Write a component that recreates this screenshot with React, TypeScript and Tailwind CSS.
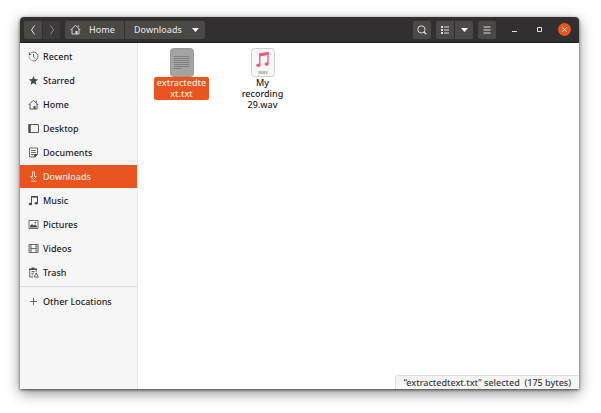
import { useState, type ReactNode } from "react";

const stroke = { fill: "none", stroke: "currentColor", strokeWidth: 1 };

const icons: Record<string, ReactNode> = {
  Recent: (
    <g {...stroke} strokeWidth={0.8}>
      <path d="M3.2 1.6A4.5 4.5 0 1 1 5.5 10" />
      <path d="M5.5 10A4.5 4.5 0 0 1 1.2 4.6" strokeDasharray="1.2 1" />
      <path d="M5.5 3v3l1.8 1.6" />
      <path d="M.8 1v2.8h2.8z" fill="currentColor" stroke="none" />
    </g>
  ),
  Starred: <path d="M5.5 1l1.3 3.1 3.4.3-2.6 2.2.8 3.3-2.9-1.8-2.9 1.8.8-3.3L.8 4.4l3.4-.3z" fill="currentColor" />,
  Home: (
    <>
      <path d="M.7 6L5.5 1.2 10.3 6M2 5v5h7V5M8.3 3.3V1.5" {...stroke} strokeWidth={0.9} />
      <path d="M5.5 7h2v3h-2z" fill="currentColor" />
    </>
  ),
  Desktop: (
    <>
      <path d="M1 1.5h9.5v8H1z" {...stroke} strokeWidth={0.9} />
      <path d="M.5 1h2.2v9H.5z" fill="currentColor" />
    </>
  ),
  Documents: (
    <>
      <path d="M1.5 1h8v6.5L7 10H1.5z" {...stroke} strokeWidth={0.8} />
      <path d="M3 3.5h5M3 5.5h5M3 7.5h2.5" {...stroke} strokeWidth={0.8} />
      <path d="M6 7h3.7L6.5 10.5z" fill="currentColor" />
    </>
  ),
  Downloads: <path d="M4.5 .8v4.7H2.5l3 3 3-3h-2V.8zM3 10.2h5" {...stroke} strokeWidth={0.8} />,
  Music: (
    <>
      <path d="M3.5 9V1.5h6V8" {...stroke} />
      <path d="M3 1h7v1.6H3z" fill="currentColor" />
      <ellipse cx="2.4" cy="9" rx="1.7" ry="1.3" fill="currentColor" />
      <ellipse cx="8.3" cy="8.2" rx="1.7" ry="1.3" fill="currentColor" />
    </>
  ),
  Pictures: (
    <>
      <path d="M1 1.5h9v8H1z" {...stroke} strokeWidth={0.8} />
      <path d="M2 8.5V7l2-2 1.6 1.6L7.2 5.4 9 7.2v1.3z" fill="currentColor" />
      <circle cx="7.4" cy="3.6" r="0.9" fill="currentColor" />
    </>
  ),
  Videos: (
    <>
      <path d="M1 1.5h9v8H1zM3 1.5v8M8 1.5v8M3 5.5h5" {...stroke} strokeWidth={0.8} />
      <path d="M1 3.5h2M1 5.5h2M1 7.5h2M8 3.5h2M8 5.5h2M8 7.5h2" {...stroke} strokeWidth={0.4} />
    </>
  ),
  Trash: (
    <>
      <path d="M1 1.5h8V3H1zM3.5.5h3v1h-3z" fill="currentColor" />
      <path d="M1.7 3v7H5M8.3 3v2.2M3.5 4.5h3M3.5 6.3h2.5M3.5 8h1.5" {...stroke} strokeWidth={0.8} />
      <path d="M8.2 6l2.2 4H6z" {...stroke} strokeWidth={0.8} strokeLinejoin="round" />
    </>
  ),
  "Other Locations": <path d="M5.5 2v7M2 5.5h7" {...stroke} strokeWidth={0.8} />,
};

const places = ["Recent", "Starred", "Home", "Desktop", "Documents", "Downloads", "Music", "Pictures", "Videos", "Trash"];

function PlaceIcon({ name }: { name: string }) {
  return (
    <svg viewBox="0 0 11 11" className="h-[11px] w-[11px] shrink-0" aria-hidden="true">
      {icons[name]}
    </svg>
  );
}

function Place({ name, active, onSelect }: { name: string; active: boolean; onSelect: () => void }) {
  return (
    <button
      onClick={onSelect}
      className={`${active ? "bg-[#e95420] text-[#ffe9df]" : "text-[#4a4a4a]"} flex h-[23px] w-full items-center gap-1 pl-2 text-left`}
    >
      <PlaceIcon name={name} />
      <span className={active ? "text-[#ffe9df]" : "text-[#1c1c1c]"}>{name}</span>
    </button>
  );
}

function Caret() {
  return (
    <svg viewBox="0 0 7 4" className="h-1 w-[7px]" aria-hidden="true">
      <path d="M0 0h7L3.5 4z" fill="#fff" />
    </svg>
  );
}

const tool = "flex h-[18px] w-[18px] items-center justify-center bg-[#4b4946]";

function HeaderBar() {
  return (
    <header className="flex h-[26px] shrink-0 items-center rounded-t-[4px] border-b border-[#1d1b1b] bg-[#322f30] pr-2 pl-1 text-[#dedede]">
      <div className="flex gap-px">
        <button aria-label="Back" className={`${tool} rounded-l-[2px]`}>
          <svg viewBox="0 0 6 10" className="h-[10px] w-[6px]"><path d="M4.5 .5L1.5 5l3 4.5" {...stroke} /></svg>
        </button>
        <button aria-label="Forward" className="flex h-[18px] w-[17px] items-center justify-center rounded-r-[2px] bg-[#3d3b3a] text-[#8b8987]">
          <svg viewBox="0 0 6 10" className="h-[10px] w-[6px]"><path d="M1.5 .5l3 4.5-3 4.5" {...stroke} /></svg>
        </button>
      </div>

      <nav className="ml-[5px] flex gap-px">
        <button className="flex h-[18px] w-[59px] items-center gap-2 rounded-l-[2px] bg-[#4b4946] pl-[5px]">
          <PlaceIcon name="Home" />
          Home
        </button>
        <button className="flex h-[18px] w-20 items-center justify-between rounded-r-[2px] bg-[#4b4946] pr-[6px] pl-[9px]">
          Downloads
          <Caret />
        </button>
      </nav>

      <div className="ml-auto flex gap-[5px]">
        <button aria-label="Search" className={`${tool} rounded-[2px]`}>
          <svg viewBox="0 0 10 10" className="h-[10px] w-[10px]">
            <circle cx="4.4" cy="4.4" r="3.6" {...stroke} />
            <path d="M7 7l2.3 2.3" {...stroke} strokeWidth={1.3} />
          </svg>
        </button>
        <div className="flex gap-px">
          <button aria-label="List view" className={`${tool} rounded-l-[2px]`}>
            <svg viewBox="0 0 8 8" className="h-2 w-2">
              <path d="M0 0h2v2H0zM0 3h2v2H0zM0 6h2v2H0z" fill="currentColor" />
              <path d="M3 1h5M3 4h5M3 7h5" {...stroke} />
            </svg>
          </button>
          <button aria-label="View options" className={`${tool} rounded-r-[2px]`}><Caret /></button>
        </div>
        <button aria-label="Menu" className={`${tool} rounded-[2px]`}>
          <svg viewBox="0 0 8 8" className="h-2 w-2"><path d="M.5 1h7M.5 4h7M.5 7h7" {...stroke} /></svg>
        </button>
      </div>

      <div className="ml-3 flex items-center gap-3">
        <button aria-label="Minimize" className="flex h-[13px] w-[13px] items-center justify-center">
          <svg viewBox="0 0 5 5" className="h-[5px] w-[5px]"><path d="M0 4.5h5" {...stroke} /></svg>
        </button>
        <button aria-label="Maximize" className="flex h-[13px] w-[13px] items-center justify-center">
          <svg viewBox="0 0 5 5" className="h-[5px] w-[5px]"><path d="M.5.5h4v4h-4z" {...stroke} /></svg>
        </button>
        <button aria-label="Close" className="flex h-[13px] w-[13px] items-center justify-center rounded-full bg-[#e95420] text-white">
          <svg viewBox="0 0 5 5" className="h-[5px] w-[5px]"><path d="M.3.3l4.4 4.4M4.7.3L.3 4.7" {...stroke} /></svg>
        </button>
      </div>
    </header>
  );
}

function TextFileIcon() {
  return (
    <svg viewBox="0 0 24 29" className="h-[29px] w-6" aria-hidden="true">
      <rect x="0.5" y="0.5" width="23" height="28" rx="3" fill="#a3a3a3" stroke="#999" />
      <path d="M4 8.5h15M4 10.5h16M4 12.5h15M4 14.5h16M4 16.5h15M4 18.5h16M4 20.5h8" stroke="#777" strokeWidth="0.8" />
    </svg>
  );
}

function AudioFileIcon() {
  return (
    <svg viewBox="0 0 24 29" className="h-[29px] w-6" aria-hidden="true">
      <rect x="0.5" y="0.5" width="23" height="28" rx="3" fill="#f8f8f8" stroke="#cfcfcf" />
      <path d="M8.8 17V6l8.2-1.2v11" fill="none" stroke="#ef5a78" strokeWidth="1.3" />
      <path d="M8.2 5.6L17.6 4v3L8.2 8.6z" fill="#ef5a78" />
      <ellipse cx="7.4" cy="17.3" rx="2.1" ry="1.8" fill="#ef5a78" />
      <ellipse cx="15.6" cy="16" rx="2.1" ry="1.8" fill="#ef5a78" />
      <text x="12" y="25.5" textAnchor="middle" fontSize="5" fill="#8a8a8a">wav</text>
    </svg>
  );
}

export default function App() {
  const [current, setCurrent] = useState("Downloads");

  return (
    <div className="h-screen bg-white pt-[17px] pr-[22px] pb-6 pl-5 font-['Noto_Sans','Open_Sans',sans-serif] text-[9px] leading-[11px] font-medium">
      <div className="flex h-full flex-col rounded-t-[4px] shadow-[0_1px_3px_rgba(0,0,0,0.6),0_4px_14px_rgba(0,0,0,0.45)]">
        <HeaderBar />
        <div className="flex min-h-0 flex-1">
          <aside className="w-[118px] shrink-0 border-r border-[#e6e6e6] bg-[#f6f6f6] pt-[2px]">
            <div className="flex flex-col gap-px">
              {places.map((name) => (
                <Place key={name} name={name} active={current === name} onSelect={() => setCurrent(name)} />
              ))}
            </div>
            <div className="mt-[2px] border-t border-[#dcdcdc] pt-[3px]">
              <Place name="Other Locations" active={current === "Other Locations"} onSelect={() => setCurrent("Other Locations")} />
            </div>
          </aside>

          <main className="relative flex-1 bg-white">
            <div className="flex items-start gap-[26px] pt-[5px] pl-4 text-center">
              <button className="flex w-[55px] flex-col items-center">
                <TextFileIcon />
                <span className="w-full rounded-[2px] bg-[#e95420] px-[2px] pb-px break-all text-[#ffe9df]">extractedtext.txt</span>
              </button>
              <button className="flex w-[55px] flex-col items-center text-[#1c1c1c]">
                <AudioFileIcon />
                <span className="px-1">My recording 29.wav</span>
              </button>
            </div>
            <div className="absolute right-0 bottom-0 rounded-tl-[3px] border-t border-l border-[#dedede] bg-[#f6f6f6] py-px pr-2 pl-[7px] whitespace-pre text-[#3c3c3c]">
              “extractedtext.txt” selected  (175 bytes)
            </div>
          </main>
        </div>
      </div>
    </div>
  );
}
